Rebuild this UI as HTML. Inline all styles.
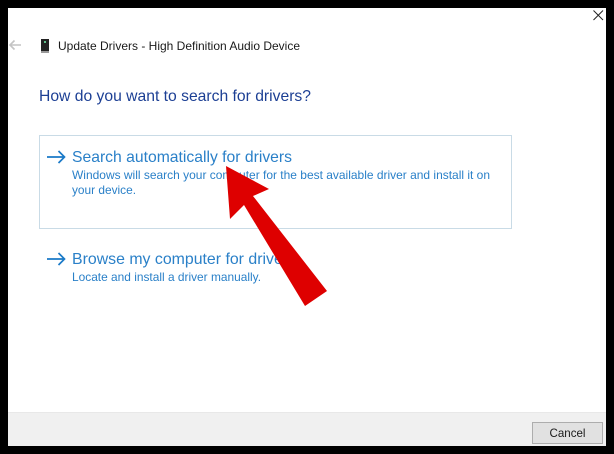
<!DOCTYPE html>
<html>
<head>
<meta charset="utf-8">
<style>
html,body{margin:0;padding:0;width:614px;height:454px;overflow:hidden;background:#000}
svg{display:block}
text{font-family:"Liberation Sans",sans-serif}
</style>
</head>
<body>
<svg width="614" height="454" viewBox="0 0 614 454" xmlns="http://www.w3.org/2000/svg">
<rect width="614" height="454" fill="#000"/>
<rect x="8" y="8" width="598" height="438" fill="#fff"/>
<rect x="8" y="412" width="598" height="34" fill="#f0f0f0"/>
<rect x="8" y="412" width="598" height="1" fill="#e8e8e8"/>
<path d="M593.5 10.5L603 20M603 10.5L593.5 20" stroke="#222" stroke-width="1" fill="none"/>
<path d="M21 45H10M14.500 40.500L10 45L14.500 49.500" stroke="#c4c4c4" stroke-width="1.600" fill="none"/>
<rect x="41" y="39" width="8" height="13" fill="#222"/>
<rect x="44" y="41" width="2" height="2" fill="#5fc08a"/>
<rect x="41" y="51" width="8" height="2" fill="#999"/>
<text x="58" y="50" font-size="12" fill="#1a1a1a" textLength="242" lengthAdjust="spacingAndGlyphs">Update Drivers - High Definition Audio Device</text>
<text x="39" y="101" font-size="16" fill="#1c3f94" textLength="272" lengthAdjust="spacingAndGlyphs">How do you want to search for drivers?</text>
<rect x="39.500" y="135.500" width="472" height="93" fill="none" stroke="#c9dbe6" stroke-width="1"/>
<path d="M47 157H64.500M58.500 151L64.500 157L58.500 163" stroke="#1a7ac8" stroke-width="1.700" fill="none"/>
<text x="72" y="162" font-size="16" fill="#2a80c8" textLength="220" lengthAdjust="spacingAndGlyphs">Search automatically for drivers</text>
<text x="72" y="179" font-size="12" fill="#2a80c8" textLength="418" lengthAdjust="spacingAndGlyphs">Windows will search your computer for the best available driver and install it on</text>
<text x="72" y="194" font-size="12" fill="#2a80c8" textLength="64" lengthAdjust="spacingAndGlyphs">your device.</text>
<path d="M47 259H64.500M58.500 253L64.500 259L58.500 265" stroke="#1a7ac8" stroke-width="1.700" fill="none"/>
<text x="72" y="264" font-size="16" fill="#2a80c8" textLength="224" lengthAdjust="spacingAndGlyphs">Browse my computer for drivers</text>
<text x="72" y="281" font-size="12" fill="#2a80c8" textLength="189" lengthAdjust="spacingAndGlyphs">Locate and install a driver manually.</text>
<polygon points="226,166 269,189 253,196 327,291 305,306 244,205 230,219" fill="#de0000"/>
<rect x="532.500" y="422.500" width="70" height="21" fill="#e1e1e1" stroke="#adadad" stroke-width="1"/>
<text x="567.500" y="437" font-size="12" fill="#1a1a1a" text-anchor="middle" textLength="36" lengthAdjust="spacingAndGlyphs">Cancel</text>
</svg>
</body>
</html>
